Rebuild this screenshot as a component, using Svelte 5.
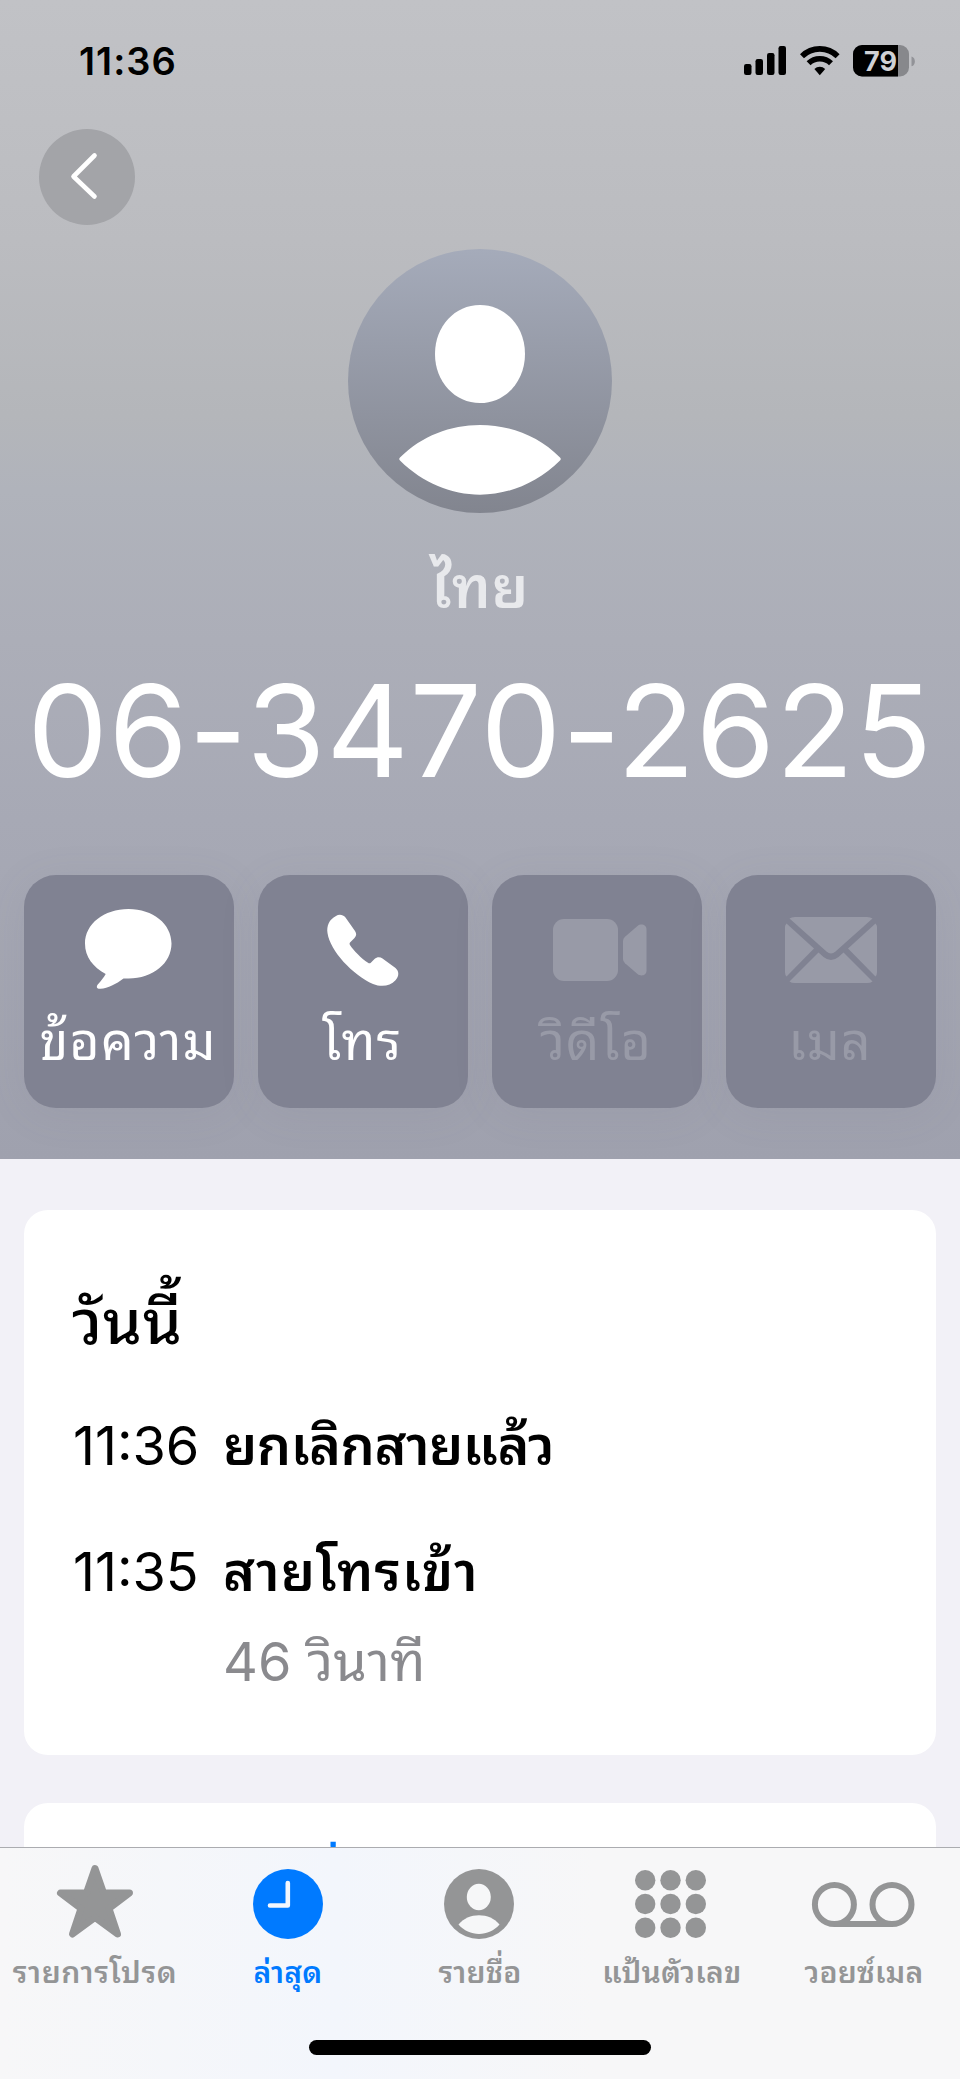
<script>
  const actions = [
    { id: 'message', label: 'ข้อความ', on: true },
    { id: 'call', label: 'โทร', on: true },
    { id: 'video', label: 'วิดีโอ', on: false },
    { id: 'mail', label: 'เมล', on: false }
  ];
  const calls = [
    { time: '11:36', kind: 'ยกเลิกสายแล้ว', length: '' },
    { time: '11:35', kind: 'สายโทรเข้า', length: '46 วินาที' }
  ];
  const tabs = [
    { id: 'favorites', label: 'รายการโปรด' },
    { id: 'recents', label: 'ล่าสุด' },
    { id: 'contacts', label: 'รายชื่อ' },
    { id: 'keypad', label: 'แป้นตัวเลข' },
    { id: 'voicemail', label: 'วอยซ์เมล' }
  ];
  const dots = [0, 1, 2];
</script>

<div class="phone">
  <section class="hero">
    <header class="status">
      <span class="clock">11:36</span>
      <svg class="indicators" width="172" height="32" viewBox="744 45 172 32">
        <rect x="744" y="64" width="7.5" height="11" rx="2.2" />
        <rect x="755.5" y="59" width="7.5" height="16" rx="2.2" />
        <rect x="767" y="53" width="7.5" height="22" rx="2.2" />
        <rect x="778.5" y="46" width="7.5" height="29" rx="2.2" />
        <g fill="none" stroke="#000" stroke-width="5.6">
          <path d="M802 56.2a25.300 25.300 0 0 1 35.600 0" />
          <path d="M808.600 63.300a16 16 0 0 1 22.400 0" />
        </g>
        <path d="M819.800 75.200l-5.400-6.300a8 8 0 0 1 10.800 0z" />
        <clipPath id="level"><rect x="853" y="45" width="45" height="32" /></clipPath>
        <rect x="853" y="45" width="56" height="31.500" rx="9" fill="#87888c" />
        <rect x="853" y="45" width="56" height="31.500" rx="9" clip-path="url(#level)" />
        <path d="M911.500 56.500c4.500 1 4.500 8.800 0 9.800z" fill="#929398" />
        <text x="880.500" y="70.800" text-anchor="middle">79</text>
      </svg>
    </header>
    <button class="back" aria-label="กลับ">
      <svg width="96" height="96" viewBox="0 0 96 96"><path d="M55.500 26.500L34.500 47.500L55.500 67.500" fill="none" stroke="#fff" stroke-width="4.600" stroke-linecap="round" stroke-linejoin="round" /></svg>
    </button>
    <svg class="avatar" width="264" height="264" viewBox="0 0 264 264">
      <defs><linearGradient id="face" x1="0" y1="0" x2="0" y2="1"><stop offset="0" stop-color="#a5abba" /><stop offset="1" stop-color="#82858f" /></linearGradient></defs>
      <circle cx="132" cy="132" r="132" fill="url(#face)" />
      <path d="M132 56C157 56 177 77 177 105S157 154 132 154S87 133 87 105S107 56 132 56Z" fill="#fff" />
      <path d="M52 208.500Q50.500 210 52 211.500C98 257 166 257 212 211.500Q213.500 210 212 208.500C169 165 95 165 52 208.500Z" fill="#fff" />
    </svg>
    <p class="name">ไทย</p>
    <h1 class="number">06-3470-2625</h1>
    <div class="actions">
      {#each actions as a}
        <button class="action" class:off={!a.on}>
          <svg class="glyph" width="100" height="86" viewBox="0 0 100 86" fill="currentColor">
            {#if a.id === 'message'}
              <path d="M49.500 4C74 4 92.500 19 92.500 38.500S74 73.500 49.500 73.500H44.500C37 79 29 83.500 21.500 83.800C17.500 84 17 81.500 19 79.200C22 76 25 72 26.700 69C14 62 6 52 6 38.500C6 19 25 4 49.500 4Z" />
            {:else if a.id === 'call'}
              <path d="M23 11C26 9 30 9.500 32.500 12.500L42 26C43.800 28.800 43.500 30.800 41.500 33L37 37.500Q36.200 38.500 36.800 39.700C41 46 48 53 55 57.800Q56.500 58.800 57.800 57.800L61.500 54C64 51.800 67 51.800 69.500 53.500L82.500 63C86.500 66.500 86 71.500 82.500 75.300C77 81.500 68 82.200 60 79C40 70 17 46 14.500 28C13.500 21 16 14.500 23 11Z" />
            {:else if a.id === 'video'}
              <rect x="6" y="14" width="65" height="62" rx="11" />
              <path d="M76 36Q76 33.500 78 31.700L90.500 21C94 18.300 99.500 19.500 99.500 24.500V65.500C99.500 70.500 94 71.800 90.500 69L78 58.300Q76 56.500 76 54Z" />
            {:else}
              <path d="M8.500 13.500Q10.500 12 14 12H86Q89.500 12 91.500 13.500L54.500 46.500Q50 50.500 45.500 46.500Z" />
              <path d="M5.500 18.500L33 43.500L5.500 71.500Q4 70 4 67V22Q4 20 5.500 18.500Z" />
              <path d="M94.500 18.500L67 43.500L94.500 71.500Q96 70 96 67V22Q96 20 94.500 18.500Z" />
              <path d="M8.500 76.500L37.500 47.500L42.500 52Q50 58 57.500 52L62.500 47.500L91.500 76.500Q89.500 78 86 78H14Q10.500 78 8.500 76.500Z" />
            {/if}
          </svg>
          <span>{a.label}</span>
        </button>
      {/each}
    </div>
  </section>

  <main>
    <section class="card log">
      <h2>วันนี้</h2>
      {#each calls as c}
        <div class="call">
          <time>{c.time}</time>
          <div class="detail">
            <strong>{c.kind}</strong>
            {#if c.length}<span>{c.length}</span>{/if}
          </div>
        </div>
      {/each}
    </section>
    <section class="card more"><span>แบ่งปันรายชื่อ</span></section>
  </main>

  <nav>
    <div class="tabs">
      {#each tabs as t}
        <a class={t.id} href="#{t.id}">
          <svg width="110" height="80" viewBox="0 0 110 80" fill="currentColor">
            {#if t.id === 'favorites'}
              <path d="M54 5.500L62.500 30H88.500L68 45.500L76.500 71L54 54.500L31.500 71L40 45.500L19.500 30H45.500Z" stroke="currentColor" stroke-width="7" stroke-linejoin="round" />
            {:else if t.id === 'recents'}
              <circle cx="55" cy="41" r="35" />
              <path d="M54.800 20V42.500H37" fill="none" stroke="#f4f7fd" stroke-width="4.600" stroke-linecap="round" stroke-linejoin="round" />
            {:else if t.id === 'contacts'}
              <circle cx="54" cy="41" r="35" />
              <ellipse cx="53.800" cy="34" rx="12" ry="13.200" fill="#f6f7f8" />
              <path d="M33.500 61.500C43 49 65 49 74.500 61.500C64 74 44 74 33.500 61.500Z" fill="#f6f7f8" />
            {:else if t.id === 'keypad'}
              {#each dots as r}{#each dots as c}<circle cx={28.2 + c * 25.3} cy={17.3 + r * 23.7} r="10.200" />{/each}{/each}
            {:else}
              <g fill="none" stroke="currentColor" stroke-width="6"><circle cx="25.400" cy="41.500" r="19.500" /><circle cx="83" cy="41.500" r="19.500" /><path d="M25.400 61H83" /></g>
            {/if}
          </svg>
          <span>{t.label}</span>
        </a>
      {/each}
    </div>
    <div class="home"></div>
  </nav>
</div>

<style>
  :global(body) { background: #f2f1f7; }
  * { box-sizing: border-box; }
  .phone { width: 960px; height: 2079px; overflow: hidden; display: flex; flex-direction: column; background: #f2f1f7; font-family: Inter, "Noto Sans Thai Looped", Loma, Garuda, Waree, "Noto Sans Thai", "Noto Sans", sans-serif; color: #000; }
  button { border: 0; padding: 0; font: inherit; color: #fff; display: block; }
  h1, h2, p { margin: 0; }
  .hero { flex: none; height: 1159px; display: flex; flex-direction: column; align-items: center; background: linear-gradient(#c1c2c6 0, #bbbcc0 240px, #b4b6ba 415px, #b0b3bb 490px, #acaeb8 640px, #a7a9b5 820px, #9fa1ae 1159px); }
  .status { width: 100%; height: 129px; padding: 44px 44px 0 79px; display: flex; justify-content: space-between; align-items: flex-start; }
  .clock { font-size: 38px; font-weight: 600; line-height: 34px; letter-spacing: 1px; }
  .indicators { margin-top: 1px; }
  .indicators text { font: 700 27px Inter, sans-serif; fill: #d0d1d4; }
  .back { align-self: flex-start; margin-left: 39px; width: 96px; height: 96px; border-radius: 50%; background: #a3a4a8; flex: none; }
  .back svg { display: block; }
  .avatar { margin-top: 24px; flex: none; }
  .name { margin-top: 29px; height: 91px; line-height: 90px; font-size: 58px; font-weight: 600; letter-spacing: .8px; color: #e8e9ec; }
  .number { margin-top: 38px; height: 120px; line-height: 120px; font-size: 128px; font-weight: 400; letter-spacing: .6px; color: #fff; white-space: nowrap; }
  .actions { margin-top: 84px; width: 912px; display: grid; grid-template-columns: repeat(4, 1fr); gap: 24px; }
  .action { height: 233px; border-radius: 32px; background: #808292; display: flex; flex-direction: column; align-items: center; padding-top: 30px; box-shadow: 0 6px 40px rgba(110, 112, 128, .1); white-space: nowrap; }
  .action span { font-size: 52px; line-height: 80px; margin-top: 11px; margin-right: 2px; letter-spacing: 1px; }
  .glyph { flex: none; }
  .off { color: #989aa7; }
  main { flex: none; height: 688px; overflow: hidden; padding: 51px 24px 0; display: flex; flex-direction: column; gap: 48px; }
  .card { background: #fff; border-radius: 24px; flex: none; }
  .log { height: 545px; padding: 67px 48px 0; }
  h2 { font-size: 62px; font-weight: 500; line-height: 90px; letter-spacing: .6px; }
  .call { display: flex; margin-top: 38px; }
  .call:nth-of-type(1) { margin-top: 35px; }
  time { width: 151px; padding-left: 1px; font-size: 54px; line-height: 88px; }
  .detail { display: flex; flex-direction: column; }
  .detail strong { font-size: 54px; font-weight: 600; line-height: 88px; letter-spacing: -.5px; }
  .call:nth-of-type(2) strong { letter-spacing: 1.100px; }
  .detail span { font-size: 54px; line-height: 91px; color: #8a8a8e; letter-spacing: .2px; }
  .more { padding: 33px 48px; color: #007aff; font-size: 54px; font-weight: 500; line-height: 90px; height: 120px; letter-spacing: -1.600px; }
  nav { flex: none; height: 232px; border-top: 1px solid #abacb0; background: linear-gradient(90deg, #f7f7f8, #f3f6fc 35%, #f7f7f8 62%); display: flex; flex-direction: column; align-items: center; }
  .tabs { display: grid; grid-template-columns: repeat(5, 192px); height: 192px; padding-top: 15px; margin: 0; }
  a { display: flex; flex-direction: column; align-items: center; color: #949596; text-decoration: none; white-space: nowrap; }
  a span { font-size: 30px; font-weight: 600; line-height: 50px; margin-top: 4px; letter-spacing: .2px; }
  .favorites span { letter-spacing: .6px; margin-right: 2px; }
  .recents { color: #007aff; }
  .home { width: 342px; height: 15px; border-radius: 8px; background: #000; }
</style>
